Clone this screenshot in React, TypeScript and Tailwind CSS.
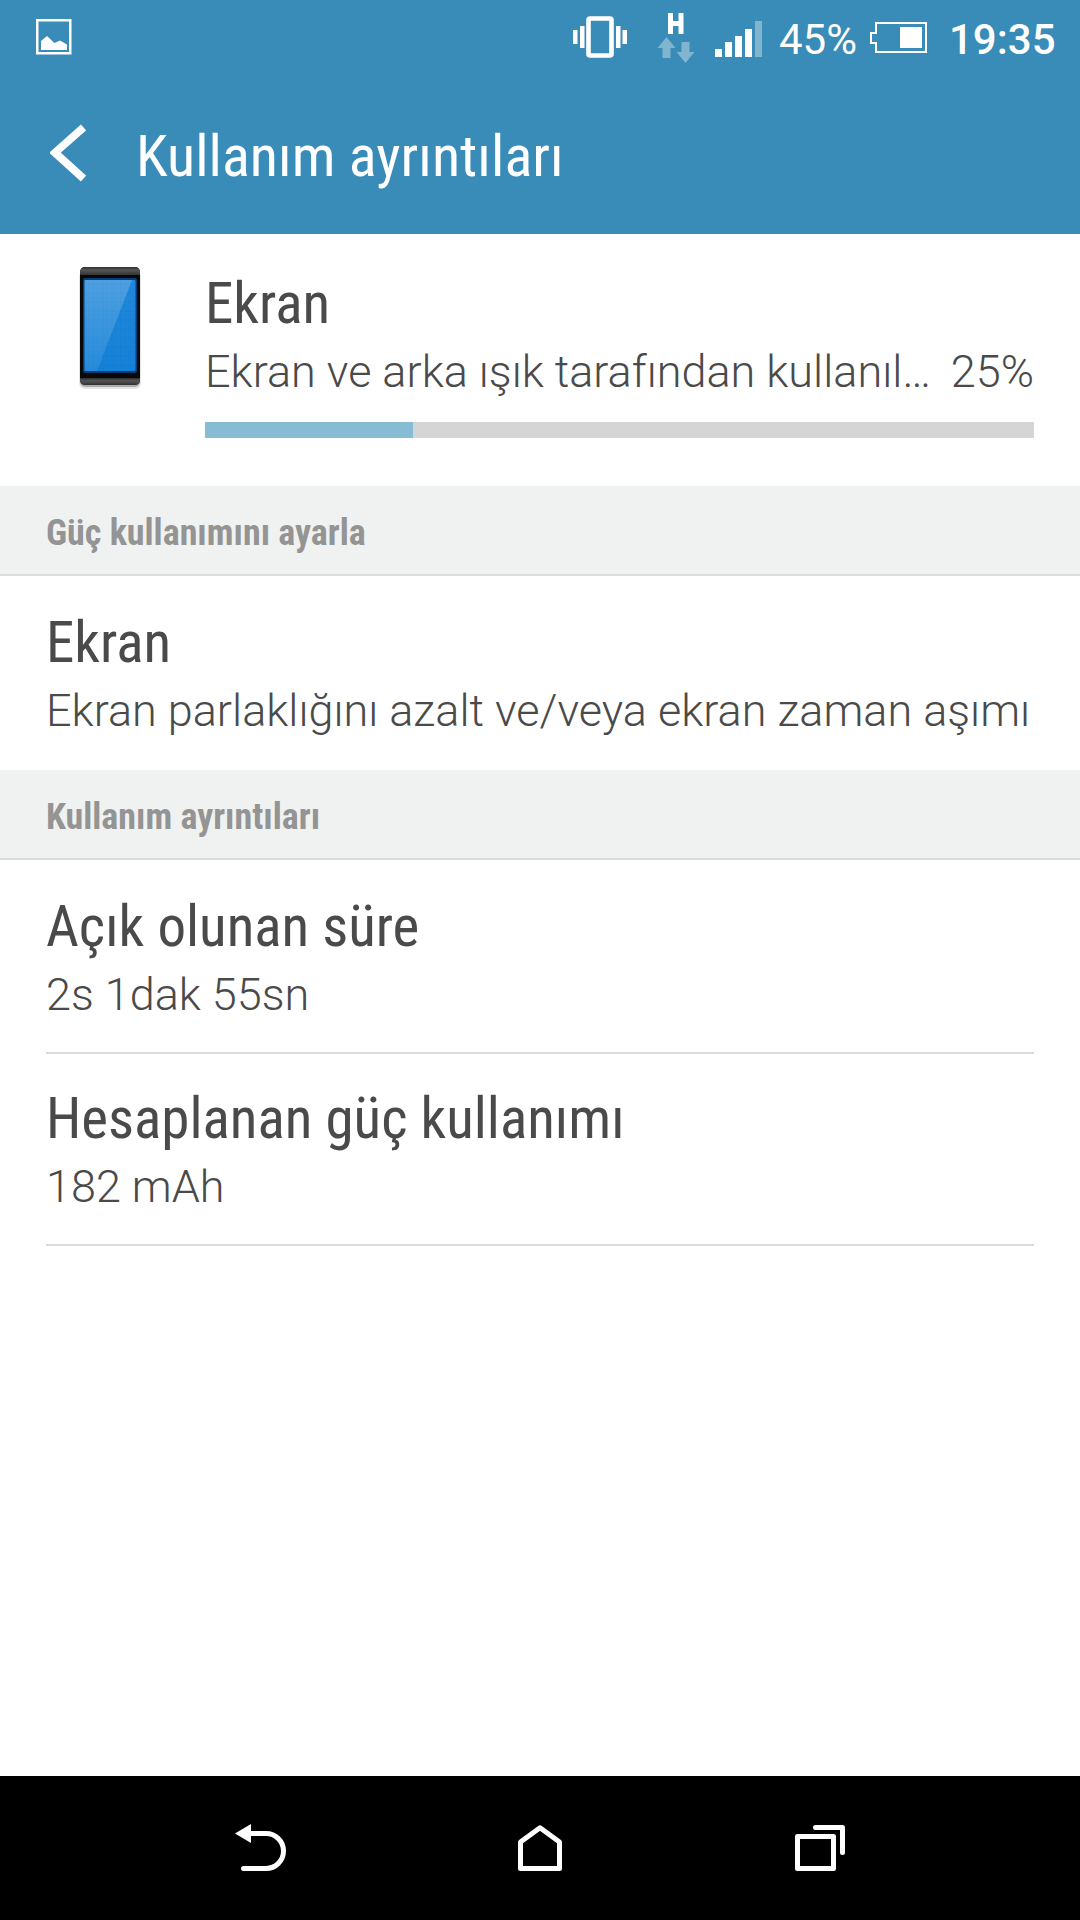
import React from "react";

const SectionHeader: React.FC<{ label: string }> = ({ label }) => (
  <h2 className="h-[90px] mb-[2px] pt-[24px] pl-[46px] bg-[#f0f2f1] border-b-2 border-[#dadcdb] text-[36px] leading-[46px] font-bold [font-stretch:75%] text-[#949494] whitespace-nowrap">
    {label}
  </h2>
);

type RowProps = {
  title: string;
  detail: string;
  divider?: boolean;
};

const Row: React.FC<RowProps> = ({ title, detail, divider }) => (
  <div className="px-[46px]">
    <div
      className={
        divider
          ? "h-[192px] pt-[33px] border-b-2 border-[#dadada]"
          : "h-[192px] pt-[33px]"
      }
    >
      <h3 className="text-[57px] leading-[64px] [font-stretch:75%] whitespace-nowrap">
        {title}
      </h3>
      <p className="mt-[4px] text-[45px] leading-[64px] font-light whitespace-nowrap">
        {detail}
      </p>
    </div>
  </div>
);

const StatusBar: React.FC = () => (
  <div className="h-[78px] flex items-center text-white">
    {/* Screenshot notification */}
    <svg className="w-[36px] h-[36px] ml-[36px] mb-[4px]" viewBox="0 0 36 36">
      <rect x="1.25" y="1.25" width="33" height="33" fill="none" stroke="currentColor" strokeWidth="2.5" />
      <path d="M5 31V22L11 17L18.500 24L24 21.500L31 25.500V31Z" fill="currentColor" />
    </svg>

    {/* Vibrate */}
    <svg className="w-[54px] h-[42px] ml-auto mb-[4px]" viewBox="0 0 54 42">
      <rect x="15.500" y="2.500" width="23" height="37" rx="1.500" fill="none" stroke="currentColor" strokeWidth="4.600" />
      <path d="M0 14h4.500v14H0zM7 10h4.500v22H7zM43 10h4.500v22H43zM49.500 14H54v14h-4.500z" fill="currentColor" />
    </svg>

    {/* Mobile data */}
    <svg className="w-[38px] h-[52px] ml-[30px] mb-[2px]" viewBox="0 0 38 52">
      <path d="M11 1h5v8h5.500V1h5v21h-5v-8H16v8h-5z" fill="currentColor" />
      <path d="M9.500 25L18.500 36H13.500V46H5.500V36H0.500ZM24.500 30H32.500V40H37.500L28.500 51L19.500 40H24.500Z" fill="#80b5d0" />
    </svg>

    {/* Signal strength */}
    <svg className="w-[48px] h-[36px] ml-[20px]" viewBox="0 0 48 36">
      <path d="M0 28h7v8H0zM10 21h7v15h-7zM20 15h7v21h-7zM30 8h7v28h-7z" fill="currentColor" />
      <path d="M40 0h7v36h-7z" fill="#80b5d0" />
    </svg>

    <span className="mt-[2px] ml-[16px] text-[42px] leading-[50px]">45%</span>

    {/* Battery */}
    <svg className="w-[57px] h-[31px] ml-[13px] mb-[3px]" viewBox="0 0 57 31">
      <path d="M6 1H56V30H6V21H1V11H6Z" fill="none" stroke="currentColor" strokeWidth="2" />
      <path d="M30 5h22v21H30z" fill="currentColor" />
    </svg>

    <span className="w-[106px] mt-[2px] ml-[22px] mr-[25px] text-[42px] leading-[50px] font-medium">
      19:35
    </span>
  </div>
);

const PhoneIcon: React.FC = () => (
  <svg className="w-[70px] h-[126px]" viewBox="0 0 70 126">
    <defs>
      <linearGradient id="cap" x1="0" y1="0" x2="0" y2="1">
        <stop offset="0" stopColor="#303030" />
        <stop offset="0.4" stopColor="#555" />
        <stop offset="1" stopColor="#333" />
      </linearGradient>
      <linearGradient id="screen" x1="0" y1="0" x2="0" y2="1">
        <stop offset="0" stopColor="#2288da" />
        <stop offset="1" stopColor="#1481d8" />
      </linearGradient>
      <linearGradient id="shine" x1="0" y1="0" x2="0" y2="1">
        <stop offset="0" stopColor="#fff" stopOpacity="0.2" />
        <stop offset="1" stopColor="#fff" stopOpacity="0.08" />
      </linearGradient>
      <pattern id="mesh" width="9" height="9" patternUnits="userSpaceOnUse">
        <path d="M0 1h9M1 0v9M5 3v4" stroke="#0668bb" strokeOpacity="0.22" fill="none" />
      </pattern>
    </defs>
    <rect x="4" y="6" width="62" height="118" rx="6" fill="#000" fillOpacity="0.1" />
    <rect x="5" y="5" width="60" height="117" rx="5" fill="#000" fillOpacity="0.25" />
    <rect x="5" y="2" width="60" height="118" rx="5" fill="#090909" />
    <path d="M5 10V7a5 5 0 0 1 5-5H60a5 5 0 0 1 5 5V10Z" fill="url(#cap)" />
    <path d="M5 113H65V115a5 5 0 0 1-5 5H10a5 5 0 0 1-5-5Z" fill="url(#cap)" />
    <rect x="8" y="13" width="54" height="95" rx="2" fill="#063c78" />
    <rect x="9.500" y="15" width="51" height="91" rx="1" fill="url(#screen)" />
    <rect x="9.500" y="15" width="51" height="91" fill="url(#mesh)" />
    <path d="M9.500 15H57L22 106H9.500Z" fill="url(#shine)" />
  </svg>
);

const NavBar: React.FC = () => (
  <nav className="h-[144px] bg-black flex justify-between px-[210px] text-white">
    <svg className="w-[100px] h-[144px]" viewBox="0 6 100 144" fill="none" stroke="currentColor" strokeWidth="5">
      <path d="M38 63.500H56A17.500 17.500 0 0 1 56 98.500H33.500" strokeLinecap="round" />
      <path d="M25 63.500L41 54V73Z" fill="currentColor" stroke="none" />
    </svg>
    <svg className="w-[100px] h-[144px]" viewBox="0 6 100 144" fill="none" stroke="currentColor" strokeWidth="5">
      <path d="M30.500 98.500V72L50 57.800L69.500 72V98.500Z" strokeLinejoin="round" />
    </svg>
    <svg className="w-[100px] h-[144px]" viewBox="0 6 100 144" fill="none" stroke="currentColor" strokeWidth="5">
      <path d="M27.500 66.500H63.500V98.500H27.500Z" strokeLinejoin="round" />
      <path d="M45.500 57.500H72.500V82.500" strokeLinecap="round" strokeLinejoin="round" />
    </svg>
  </nav>
);

const App: React.FC = () => {
  return (
    <div className="w-[1080px] h-[1920px] flex flex-col overflow-hidden bg-white font-['Roboto','Noto_Sans',sans-serif] text-[#4a4a4a]">
      <header className="h-[234px] bg-[#398bb8] text-white">
        <StatusBar />
        <div className="h-[156px] flex">
          <svg className="w-[36px] h-[58px] ml-[50px] mt-[46px]" viewBox="0 0 36 58">
            <path d="M33.500 3.500L5 28.700L33.500 54.500" fill="none" stroke="currentColor" strokeWidth="7.800" />
          </svg>
          <h1 className="ml-[50px] mt-[46px] text-[58.2px] leading-[64px] [font-stretch:75%] whitespace-nowrap">
            Kullanım ayrıntıları
          </h1>
        </div>
      </header>

      {/* Battery usage summary */}
      <div className="h-[252px] flex">
        <div className="w-[205px] pl-[75px] pt-[31px]">
          <PhoneIcon />
        </div>
        <div className="w-[829px] pt-[38px]">
          <h3 className="text-[57px] leading-[64px] [font-stretch:75%]">Ekran</h3>
          <div className="mt-[4px] flex justify-between text-[45px] leading-[64px] font-light whitespace-nowrap">
            <span>Ekran ve arka ışık tarafından kullanıl…</span>
            <span>25%</span>
          </div>
          <div className="h-[16px] mt-[18px] bg-[#d5d5d5]">
            <div className="w-[208px] h-full bg-[#86bcd4]" />
          </div>
        </div>
      </div>

      <SectionHeader label="Güç kullanımını ayarla" />
      <Row title="Ekran" detail="Ekran parlaklığını azalt ve/veya ekran zaman aşımı" />

      <SectionHeader label="Kullanım ayrıntıları" />
      <Row title="Açık olunan süre" detail="2s 1dak 55sn" divider />
      <Row title="Hesaplanan güç kullanımı" detail="182 mAh" divider />

      <div className="grow" />
      <NavBar />
    </div>
  );
};

export default App;
